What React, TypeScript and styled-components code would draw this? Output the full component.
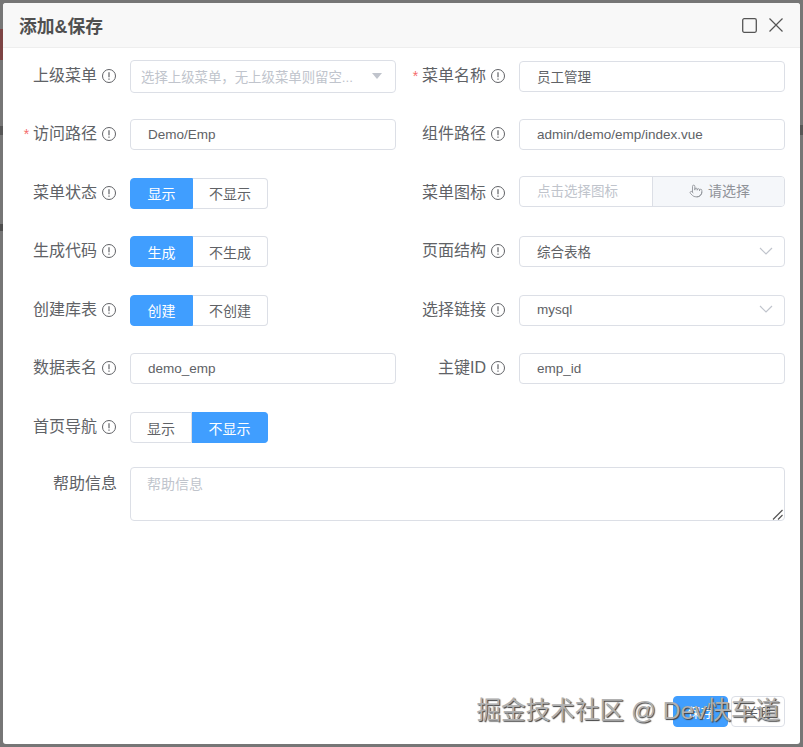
import React from "react";
import styled, { createGlobalStyle } from "styled-components";
import { Pointer } from "lucide-react";

const FONT = `"Liberation Sans", "Noto Sans CJK SC", sans-serif`;

const Global = createGlobalStyle`
  html, body { margin: 0; padding: 0; background: #767676; }
  * { box-sizing: border-box; }
`;

const Backdrop = styled.div`
  position: relative;
  width: 803px;
  height: 747px;
  padding: 3px;
  font-family: ${FONT};
  background:
    linear-gradient(#7d4444, #7d4444) 0 29px / 3px 31px no-repeat,
    linear-gradient(#565656, #565656) 0 126px / 3px 9px no-repeat,
    linear-gradient(#4e4e4e, #4e4e4e) 0 224px / 3px 7px no-repeat,
    linear-gradient(#565656, #565656) 800px 125px / 3px 10px no-repeat,
    #767676;
`;

const Dialog = styled.div`
  width: 797px;
  height: 741px;
  display: flex;
  flex-direction: column;
  background: #fff;
  border-radius: 3px;
  overflow: hidden;
`;

const Header = styled.header`
  flex: none;
  height: 45px;
  display: flex;
  align-items: center;
  justify-content: space-between;
  padding: 0 17px 0 16px;
  background: #f8f8f8;
  border-bottom: 1px solid #eeeeee;
`;

const Title = styled.h2`
  margin: 4px 0 0;
  font-size: 17.8px;
  line-height: 24px;
  font-weight: 700;
  color: #505050;
`;

const HeaderIcons = styled.div`
  display: flex;
  align-items: center;
  gap: 12px;
  color: #555;
`;

const Body = styled.main`
  flex: 1;
  padding: 12px 15px 0;
`;

const Grid = styled.div`
  display: grid;
  grid-template-columns: 378px 378px;
  column-gap: 11px;
  grid-auto-rows: 32px;
  row-gap: 26.6px;
`;

const Field = styled.div`
  display: grid;
  grid-template-columns: 112px 1fr;
  align-items: center;
  min-width: 0;
`;

const Label = styled.label`
  display: flex;
  align-items: center;
  justify-content: flex-end;
  gap: 5px;
  padding-right: 14px;
  padding-bottom: 1px;
  font-size: 16px;
  line-height: 22px;
  color: #606266;
  white-space: nowrap;
`;

const Star = styled.span`
  color: #f56c6c;
  font-size: 14px;
`;

const TipSvg = styled.svg`
  flex: none;
  color: #606266;
`;

const TextInput = styled.input`
  width: 100%;
  height: 31px;
  padding: 0 17px;
  font: 13.5px ${FONT};
  color: #606266;
  background: #fff;
  border: 1px solid #dcdfe6;
  border-radius: 4px;
  outline: none;
`;

const SelectBox = styled.div<{ $tall?: boolean }>`
  height: ${(p) => (p.$tall ? "33px" : "31px")};
  display: flex;
  align-items: center;
  justify-content: space-between;
  padding: ${(p) => (p.$tall ? "0 13px 1px 10px" : "0 11px 2px 17px")};
  border: 1px solid #dcdfe6;
  border-radius: 4px;
  background: #fff;
  color: #606266;
  font-size: 13.5px;
`;

const SelectPlaceholder = styled.span`
  color: #c0c4cc;
  font-size: 13.4px;
  white-space: nowrap;
`;

const Caret = styled.span`
  width: 0;
  height: 0;
  border-left: 5px solid transparent;
  border-right: 5px solid transparent;
  border-top: 6px solid #c0c4cc;
`;

const Radios = styled.div`
  display: flex;
  height: 31px;
`;

const RadioBtn = styled.button<{ $on?: boolean; $wide?: boolean }>`
  width: ${(p) => (p.$wide ? (p.$on ? "76px" : "75px") : p.$on ? "63px" : "62px")};
  height: 31px;
  padding: 0;
  font: 14px ${FONT};
  color: ${(p) => (p.$on ? "#fff" : "#606266")};
  background: ${(p) => (p.$on ? "#409eff" : "#fff")};
  border: 1px solid ${(p) => (p.$on ? "#409eff" : "#dcdfe6")};
  &:first-child { border-radius: 4px 0 0 4px; }
  &:not(:first-child) { border-left: 0; }
  &:last-child { border-radius: 0 4px 4px 0; }
`;

const IconPicker = styled.div`
  display: flex;
  height: 31px;
  margin-top: -3px;
  border: 1px solid #dcdfe6;
  border-radius: 4px;
  overflow: hidden;
`;

const IconPlaceholder = styled.span`
  width: 132px;
  padding-left: 17px;
  font-size: 13.5px;
  line-height: 29px;
  color: #c0c4cc;
  white-space: nowrap;
`;

const IconButton = styled.span`
  flex: 1;
  display: flex;
  align-items: center;
  justify-content: center;
  gap: 5px;
  font-size: 14px;
  line-height: 16px;
  padding-bottom: 1px;
  padding-left: 2px;
  color: #909399;
  background: #f5f7fa;
  border-left: 1px solid #dcdfe6;
`;

const HelpField = styled.div`
  display: grid;
  grid-template-columns: 112px 1fr;
  align-items: start;
  margin-top: 23px;
`;

const HelpLabel = styled(Label)`
  padding-top: 6px;
  padding-right: 13px;
`;

const HelpBox = styled.div`
  position: relative;
  height: 54px;
`;

const Help = styled.textarea`
  display: block;
  width: 100%;
  height: 54px;
  padding: 6px 16px;
  font: 14px/20px ${FONT};
  color: #606266;
  border: 1px solid #dcdfe6;
  border-radius: 4px;
  outline: none;
  resize: none;
  &::placeholder { color: #c0c4cc; opacity: 1; }
`;

const ResizeGrip = styled.svg`
  position: absolute;
  right: 1px;
  bottom: 1px;
  pointer-events: none;
`;

const Footer = styled.footer`
  flex: none;
  display: flex;
  justify-content: flex-end;
  gap: 3px;
  padding: 0 15px 17px;
`;

const FootBtn = styled.button<{ $primary?: boolean }>`
  width: ${(p) => (p.$primary ? "55px" : "54px")};
  height: 31px;
  padding: 0;
  font: 13px ${FONT};
  color: ${(p) => (p.$primary ? "#fff" : "#606266")};
  background: ${(p) => (p.$primary ? "#409eff" : "#fff")};
  border: 1px solid ${(p) => (p.$primary ? "#409eff" : "#dcdfe6")};
  border-radius: 4px;
`;

const Watermark = styled.div`
  position: absolute;
  left: 476.5px;
  top: 694px;
  font-size: 24.6px;
  line-height: 34px;
  color: #b0b0b0;
  text-shadow: 1px 1px 1px #404040;
  white-space: nowrap;
  pointer-events: none;
`;

const Tip = () => (
  <TipSvg width="14" height="14" viewBox="0 0 14 14" fill="none" stroke="currentColor" strokeWidth="1">
    <circle cx="7" cy="7" r="6.5" />
    <path d="M7 3.2v5" strokeWidth="1.2" />
    <path d="M7 9.4v1.3" strokeWidth="1.2" />
  </TipSvg>
);

const Lab = ({ text, req }: { text: string; req?: boolean }) => (
  <Label>
    <span>
      {req && <Star>* </Star>}
      {text}
    </span>
    <Tip />
  </Label>
);

const Chevron = () => (
  <svg width="14" height="14" viewBox="0 0 14 14" fill="none" stroke="#c0c4cc" strokeWidth="1.2">
    <path d="M1 4l6 6 6-6" />
  </svg>
);

const Toggle = ({ a, b, on }: { a: string; b: string; on: 0 | 1 }) => (
  <Radios>
    <RadioBtn $on={on === 0}>{a}</RadioBtn>
    <RadioBtn $on={on === 1} $wide>
      {b}
    </RadioBtn>
  </Radios>
);

export default function App() {
  return (
    <>
      <Global />
      <Backdrop>
        <Dialog>
          <Header>
            <Title>添加&amp;保存</Title>
            <HeaderIcons>
              <svg width="15" height="15" viewBox="0 0 15 15" fill="none" stroke="currentColor" strokeWidth="1.3">
                <rect x="0.7" y="0.7" width="13.6" height="13.6" rx="1.5" />
              </svg>
              <svg width="14" height="14" viewBox="0 0 14 14" fill="none" stroke="currentColor" strokeWidth="1.2">
                <path d="M0.5 0.5l13 13M13.5 0.5l-13 13" />
              </svg>
            </HeaderIcons>
          </Header>
          <Body>
            <Grid>
              <Field>
                <Lab text="上级菜单" />
                <SelectBox $tall>
                  <SelectPlaceholder>选择上级菜单，无上级菜单则留空...</SelectPlaceholder>
                  <Caret />
                </SelectBox>
              </Field>
              <Field>
                <Lab text="菜单名称" req />
                <TextInput readOnly value="员工管理" />
              </Field>
              <Field>
                <Lab text="访问路径" req />
                <TextInput readOnly value="Demo/Emp" />
              </Field>
              <Field>
                <Lab text="组件路径" />
                <TextInput readOnly value="admin/demo/emp/index.vue" />
              </Field>
              <Field>
                <Lab text="菜单状态" />
                <Toggle a="显示" b="不显示" on={0} />
              </Field>
              <Field>
                <Lab text="菜单图标" />
                <IconPicker>
                  <IconPlaceholder>点击选择图标</IconPlaceholder>
                  <IconButton>
                    <Pointer size={14} strokeWidth={1.5} />
                    请选择
                  </IconButton>
                </IconPicker>
              </Field>
              <Field>
                <Lab text="生成代码" />
                <Toggle a="生成" b="不生成" on={0} />
              </Field>
              <Field>
                <Lab text="页面结构" />
                <SelectBox>
                  综合表格
                  <Chevron />
                </SelectBox>
              </Field>
              <Field>
                <Lab text="创建库表" />
                <Toggle a="创建" b="不创建" on={0} />
              </Field>
              <Field>
                <Lab text="选择链接" />
                <SelectBox>
                  mysql
                  <Chevron />
                </SelectBox>
              </Field>
              <Field>
                <Lab text="数据表名" />
                <TextInput readOnly value="demo_emp" />
              </Field>
              <Field>
                <Lab text="主键ID" />
                <TextInput readOnly value="emp_id" />
              </Field>
              <Field>
                <Lab text="首页导航" />
                <Toggle a="显示" b="不显示" on={1} />
              </Field>
            </Grid>
            <HelpField>
              <HelpLabel>帮助信息</HelpLabel>
              <HelpBox>
                <Help placeholder="帮助信息" />
                <ResizeGrip width="12" height="12" viewBox="0 0 12 12" fill="none" stroke="#555" strokeWidth="1.2">
                  <path d="M1 11.5L10.5 2M6 11.5l4.5-4.5" />
                </ResizeGrip>
              </HelpBox>
            </HelpField>
          </Body>
          <Footer>
            <FootBtn $primary>保存</FootBtn>
            <FootBtn>关闭</FootBtn>
          </Footer>
        </Dialog>
        <Watermark>掘金技术社区 @ Dev快车道</Watermark>
      </Backdrop>
    </>
  );
}
